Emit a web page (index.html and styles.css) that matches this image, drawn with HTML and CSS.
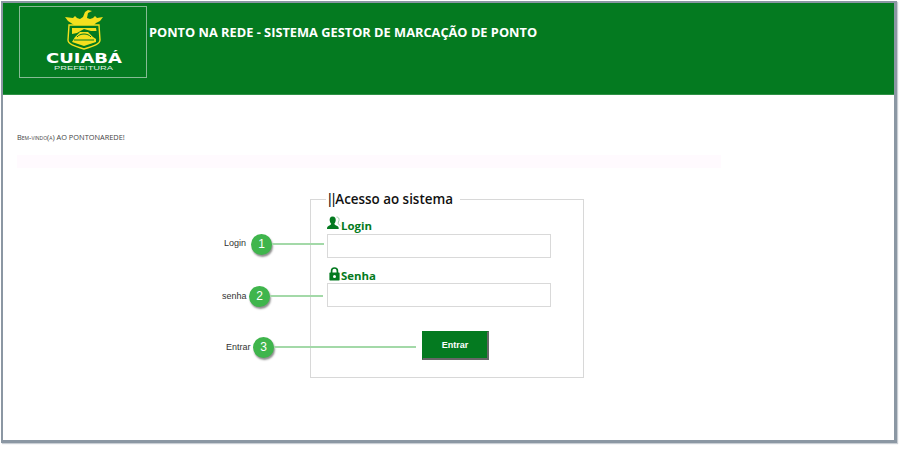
FILE: index.html
```html
<!DOCTYPE html>
<html lang="pt-BR">
<head>
<meta charset="utf-8">
<title>Ponto na Rede</title>
<link rel="stylesheet" href="styles.css">
</head>
<body>
<div class="frame">
  <header class="header">
    <div class="logo">
      <svg class="logo-svg" width="126" height="70" viewBox="0 0 126 70">
        <path d="M45 10 L53 11 L55 9 L57 11 L60 12 L63 10 L65 5 L68 3 L72 4 L68 6 L67 11 L70 12 L73 11 L75 9 L77 11 L83 10 L80 14 L76 16 L74 18 L54 18 L51 16 L48 14 Z" fill="#f4e01e"/>
        <path d="M49 18 H79 L80 33 C80 37 74 39 64 42 C54 39 48 37 48 33 Z" fill="#047a20" stroke="#f4e01e" stroke-width="1.4"/>
        <path d="M52 21 H76 L76.5 24 H71 L64 22 L57 26 L52 27 Z" fill="#f4e01e"/>
        <path d="M52 35 L55 30 L60 25 H68 L73 30 L76 32 L76 35 L64 39 Z" fill="#f4e01e"/>
        <path d="M57 30 C60 26 68 26 71 30 M54 33 H74" fill="none" stroke="#047a20" stroke-width="1"/>
        <text class="logo-name" x="26" y="56" textLength="76" lengthAdjust="spacingAndGlyphs">CUIABÁ</text>
        <text class="logo-sub" x="34" y="63" textLength="59" lengthAdjust="spacingAndGlyphs">PREFEITURA</text>
      </svg>
    </div>
    <h1 class="title">PONTO NA REDE - SISTEMA GESTOR DE MARCAÇÃO DE PONTO</h1>
  </header>
  <main class="content">
    <p class="welcome">Bem-vindo(a) AO PONTONAREDE!</p>
    <div class="band"></div>
    <form class="form-row">
      <fieldset class="access">
        <legend class="access-legend"><span class="pipes">||</span>Acesso ao sistema</legend>
        <label class="field-label field-label-login" for="login">
          <svg class="icon-user" width="15" height="15" viewBox="0 0 15 15">
            <path d="M5.5 0.5 C8 0.5 9 2.5 8.7 4.5 C8.5 6 7.8 7 7.3 7.8 C7.4 9 9.5 9.5 11 10.5 C11.6 11 11.7 12 11.7 13 H0 C0 12 0.2 11 0.8 10.5 C2 9.5 4.1 9 4.2 7.8 C3.5 7 2.9 6 2.7 4.5 C2.4 2.5 3.3 0.5 5.5 0.5 Z" fill="#047a20"/>
            <path d="M9.5 1 C11.5 1 12.5 2.5 12 4.5 C11.8 5.5 11 6.5 11 7.5 C11.5 8.5 13 8.8 13.6 10" fill="none" stroke="#8cc29a" stroke-width="0.8"/>
          </svg>
          <span class="label-text">Login</span>
        </label>
        <input class="text-input" id="login" type="text">
        <label class="field-label field-label-senha" for="senha">
          <svg class="icon-lock" width="11" height="14" viewBox="0 0 11 14">
            <path d="M2.6 6 V3.8 C2.6 2 3.8 1 5.5 1 C7.2 1 8.4 2 8.4 3.8 V6" fill="none" stroke="#047a20" stroke-width="1.7"/>
            <path d="M1.4 5.5 H9.6 C10.3 5.5 10.6 5.9 10.6 6.5 V12.5 C10.6 13.2 10.3 13.6 9.6 13.6 H1.4 C0.7 13.6 0.4 13.2 0.4 12.5 V6.5 C0.4 5.9 0.7 5.5 1.4 5.5 Z" fill="#047a20"/>
            <circle cx="5.5" cy="9.5" r="1.5" fill="#fff"/>
          </svg>
          <span>Senha</span>
        </label>
        <input class="text-input" id="senha" type="password">
        <div class="actions">
          <button class="submit" type="button">Entrar</button>
        </div>
      </fieldset>
    </form>
  </main>
  <div class="callout callout-1"><span class="callout-text">Login</span><span class="badge">1</span><span class="callout-line"></span></div>
  <div class="callout callout-2"><span class="callout-text">senha</span><span class="badge">2</span><span class="callout-line"></span></div>
  <div class="callout callout-3"><span class="callout-text">Entrar</span><span class="badge">3</span><span class="callout-line"></span></div>
</div>
</body>
</html>
```
FILE: styles.css
```css
* { box-sizing: border-box; }
html, body { margin: 0; padding: 0; background: #fff; }
body { width: 905px; height: 451px; overflow: hidden; padding: 1px 0 0 1px; font-family: "Liberation Sans", Arial, sans-serif; }
.frame {
  position: relative;
  width: 896px;
  height: 442px;
  background: #fff;
  border-style: solid;
  border-color: #8b97a3;
  border-width: 2px 3px 3px 2px;
  box-shadow: 1px 1px 1px #c9ced4;
}
.header {
  display: flex;
  align-items: flex-start;
  height: 92px;
  background: #047a20;
  border-bottom: 1px solid #2f9146;
  padding: 3px 0 0 16px;
}
.logo {
  width: 128px;
  height: 72px;
  border: 1px solid #86bb94;
  flex: none;
}
.logo-svg { display: block; }
.logo-name { font: 700 13.5px "DejaVu Sans", sans-serif; fill: #fff; }
.logo-sub { font: 400 4.5px "Liberation Sans", sans-serif; fill: #dfeee3; }
.title {
  margin: 18px 0 0 2px;
  font: 700 12.8px/17px "Open Sans", sans-serif;
  color: #fff;
  white-space: nowrap;
}
.content { padding: 38px 0 0 14px; }
.welcome {
  margin: 0;
  font: 400 7.4px/9px "Open Sans", sans-serif;
  font-variant: small-caps;
  color: #444;
  white-space: nowrap;
}
.band {
  width: 704px;
  height: 13px;
  margin-top: 13px;
  background: #fffafe;
}
.form-row { padding: 22px 0 0 293px; }
.access {
  width: 274px;
  height: 188px;
  margin: 0;
  padding: 0 0 0 16px;
  border: 1px solid #d8d8d8;
}
.access-legend {
  margin-left: -1px;
  padding: 0 7px 0 2px;
  font: 600 13.4px/19px "Open Sans", sans-serif;
  color: #111;
}
.pipes { font: 400 14px/19px "Liberation Sans", sans-serif; color: #111; }
.field-label {
  display: flex;
  align-items: flex-end;
  height: 18px;
  font: 700 11.4px/14px "Open Sans", sans-serif;
  color: #047a20;
}
.label-text { margin-bottom: 1px; }
.field-label-login { margin-top: 7px; }
.field-label-senha { margin-top: 6px; height: 19px; padding-left: 2px; }
.icon-user { margin-right: -1px; margin-bottom: 3px; }
.icon-lock { margin-right: 1px; margin-bottom: 2px; }
.text-input {
  display: block;
  width: 224px;
  height: 24px;
  margin: 0;
  border: 1px solid #d9d9d9;
  background: #fff;
  padding: 0;
}
.actions { padding: 24px 0 0 95px; }
.submit {
  display: block;
  width: 67px;
  height: 29px;
  padding: 0;
  background: #047a20;
  border-style: solid;
  border-width: 1px 2px 2px 1px;
  border-color: #047a20 #666 #666 #047a20;
  color: #fff;
  font: 700 9px "Liberation Sans", sans-serif;
}
.callout { position: absolute; display: flex; align-items: center; height: 20px; }
.callout-1 { left: 215px; top: 231px; }
.callout-2 { left: 214px; top: 283px; }
.callout-3 { left: 219px; top: 334px; }
.callout-text { width: 26px; margin-right: 1px; font-size: 9px; color: #333; white-space: nowrap; }
.callout-1 .callout-text { margin-left: 6px; padding-bottom: 2px; }
.callout-2 .callout-text { margin-left: 5px; }
.callout-3 .callout-text { margin-left: 4px; }
.badge {
  display: flex;
  align-items: center;
  justify-content: center;
  flex: none;
  width: 21px;
  height: 21px;
  border-radius: 50%;
  background: #3fb54c;
  box-shadow: 1px 2px 2px rgba(0, 0, 0, 0.45);
  color: #fff;
  font-size: 12px;
}
.callout-line { height: 2px; background: #a3d9a8; }
.callout-1 .callout-line { width: 52px; }
.callout-2 .callout-line { width: 53px; }
.callout-3 .callout-line { width: 142px; }
```
